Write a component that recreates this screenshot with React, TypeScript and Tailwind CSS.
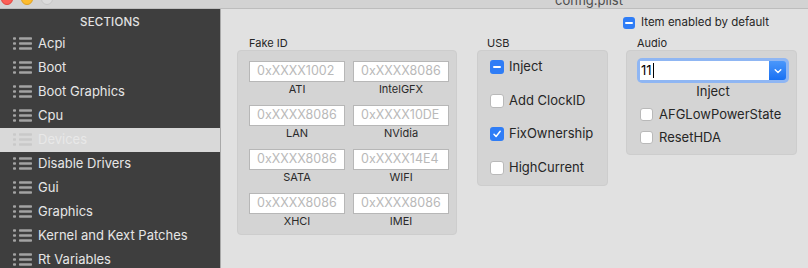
import React from "react";

const font = { fontFamily: "Inter, 'Noto Sans', 'Liberation Sans', sans-serif" };

function ListIcon({ light }: { light?: boolean }) {
  const c = light ? "#c9c9c9" : "#a3a3a3";
  return (
    <svg width="19" height="14" viewBox="0 0 19 14" className="shrink-0">
      {[1.5, 6.5, 11.5].map((y) => (
        <g key={y}>
          <rect x="0" y={y - 1.25} width="3" height="2.5" rx="0.8" fill={c} />
          <rect x="6" y={y - 1.25} width="13" height="2.5" rx="0.8" fill={c} />
        </g>
      ))}
    </svg>
  );
}

const items = [
  "Acpi",
  "Boot",
  "Boot Graphics",
  "Cpu",
  "Devices",
  "Disable Drivers",
  "Gui",
  "Graphics",
  "Kernel and Kext Patches",
  "Rt Variables",
];

function Check({ state, size = 14 }: { state: "on" | "mixed" | "off"; size?: number }) {
  if (state === "off")
    return (
      <div
        className="shrink-0 rounded-[3px] border border-[#b9b9b9] bg-white"
        style={{ width: size, height: size }}
      />
    );
  return (
    <div
      className="shrink-0 rounded-[3px] bg-[#2f7df6] flex items-center justify-center"
      style={{ width: size, height: size }}
    >
      {state === "mixed" ? (
        <div className="w-[8px] h-[2px] bg-white rounded-[1px]" />
      ) : (
        <svg width="10" height="10" viewBox="0 0 10 10">
          <path d="M2 5.2 L4.1 7.5 L8.2 2.3" fill="none" stroke="white" strokeWidth="1.5" strokeLinecap="round" strokeLinejoin="round" />
        </svg>
      )}
    </div>
  );
}

function Field({ v, label }: { v: string; label: string }) {
  return (
    <div className="flex flex-col items-center w-[96px]">
      <div className="w-[96px] h-[21px] bg-white border border-[#b7b7b7] flex items-center pl-[7px] text-[12.5px] text-[#b9b9b9] leading-none">
        {v}
      </div>
      <div className="text-[11px] text-[#2a2a2a] leading-[13px] mt-[1px]">{label}</div>
    </div>
  );
}

export default function App() {
  return (
    <div className="w-[808px] h-[268px] overflow-hidden flex flex-col bg-[#e1e1e1]" style={font}>
      {/* title bar */}
      <div className="h-[9px] shrink-0 bg-[#d3d3d3] border-b border-[#bdbdbd] relative overflow-hidden">
        <div className="absolute left-[1px] top-[-7px] flex gap-[8px]">
          <div className="w-[12px] h-[12px] rounded-full bg-[#fc5f57] border border-[#e0443e]" />
          <div className="w-[12px] h-[12px] rounded-full bg-[#fdbc2e] border border-[#dea123]" />
          <div className="w-[12px] h-[12px] rounded-full bg-[#dcdcdc] border border-[#c6c6c6]" />
        </div>
        <div className="absolute left-[555px] top-[-8px] text-[13px] text-[#4d4d4d] leading-[16px]">config.plist</div>
      </div>
      <div className="flex flex-1 min-h-0">
        {/* sidebar */}
        <div className="w-[221px] shrink-0 bg-[#3e3e3e] border-r border-[#a9a9a9] flex flex-col overflow-hidden">
          <div className="h-[23px] shrink-0 flex items-center justify-center text-[11.5px] font-medium text-[#e3e3e3] tracking-[0.2px] pt-[5px]">
            SECTIONS
          </div>
          {items.map((it) => {
            const sel = it === "Devices";
            return (
              <div
                key={it}
                className={`h-[24px] shrink-0 flex items-center pl-[13px] gap-[6px] ${sel ? "bg-[#d9d9d9]" : ""}`}
              >
                <ListIcon light={sel} />
                <span className={`text-[13px] ${sel ? "text-[#e8e8e8]" : "text-[#e6e6e6]"}`}>{it}</span>
              </div>
            );
          })}
        </div>
        {/* content */}
        <div className="flex-1 flex flex-col pl-[16px]">
          <div className="flex items-center gap-[6px] ml-[386px] mt-[7px] h-[13px] shrink-0">
            <Check state="mixed" size={12} />
            <span className="text-[11.5px] text-[#262626]">Item enabled by default</span>
          </div>
          <div className="flex mt-[7px] items-start">
            {/* Fake ID */}
            <div className="flex flex-col w-[220px]">
              <div className="text-[11px] text-[#262626] pl-[12px] h-[14px] leading-[14px]">Fake ID</div>
              <div className="bg-[#d4d4d4] rounded-[4px] border border-[#cdcdcd] h-[185px] pt-[10px] pl-[11px] flex flex-col gap-[9px]">
                <div className="flex gap-[8px]">
                  <Field v="0xXXXX1002" label="ATI" />
                  <Field v="0xXXXX8086" label="IntelGFX" />
                </div>
                <div className="flex gap-[8px]">
                  <Field v="0xXXXX8086" label="LAN" />
                  <Field v="0xXXXX10DE" label="NVidia" />
                </div>
                <div className="flex gap-[8px]">
                  <Field v="0xXXXX8086" label="SATA" />
                  <Field v="0xXXXX14E4" label="WIFI" />
                </div>
                <div className="flex gap-[8px]">
                  <Field v="0xXXXX8086" label="XHCI" />
                  <Field v="0xXXXX8086" label="IMEI" />
                </div>
              </div>
            </div>
            {/* USB */}
            <div className="flex flex-col w-[131px] ml-[20px]">
              <div className="text-[11px] text-[#262626] pl-[10px] h-[14px] leading-[14px]">USB</div>
              <div className="bg-[#d4d4d4] rounded-[4px] border border-[#cdcdcd] h-[136px] pt-[9px] pl-[12px] flex flex-col gap-[19.5px]">
                {[
                  ["Inject", "mixed"],
                  ["Add ClockID", "off"],
                  ["FixOwnership", "on"],
                  ["HighCurrent", "off"],
                ].map(([t, s]) => (
                  <div key={t} className="flex items-center gap-[5px] h-[14px]">
                    <Check state={s as "on" | "mixed" | "off"} />
                    <span className="text-[13px] text-[#262626]">{t}</span>
                  </div>
                ))}
              </div>
            </div>
            {/* Audio */}
            <div className="flex flex-col w-[171px] ml-[18px]">
              <div className="text-[11px] text-[#262626] pl-[11px] h-[14px] leading-[14px]">Audio</div>
              <div className="bg-[#d4d4d4] rounded-[4px] border border-[#cdcdcd] h-[105px] pt-[7px] pl-[10px] pr-[7px] flex flex-col">
                <div className="h-[25px] rounded-[5px] bg-[#8fb6f3] p-[3px] flex">
                  <div className="flex-1 bg-white flex items-center pl-[1px] text-[13px] text-black leading-none">
                    11<span className="w-[1px] h-[15px] bg-black ml-[1px]" />
                  </div>
                  <div className="w-[17px] bg-gradient-to-b from-[#4a97fb] to-[#1670f3] rounded-r-[3px] flex items-center justify-center">
                    <svg width="8" height="6" viewBox="0 0 8 6">
                      <path d="M1.2 1.8 L4 4.4 L6.8 1.8" fill="none" stroke="white" strokeWidth="1.4" strokeLinecap="round" strokeLinejoin="round" />
                    </svg>
                  </div>
                </div>
                <div className="text-[13px] text-[#262626] text-center h-[17px] leading-[17px] mt-[0px]">Inject</div>
                <div className="flex flex-col gap-[10px] mt-[8px] pl-[3px]">
                  {["AFGLowPowerState", "ResetHDA"].map((t) => (
                    <div key={t} className="flex items-center gap-[6px] h-[13px]">
                      <Check state="off" size={13} />
                      <span className="text-[13px] text-[#262626]">{t}</span>
                    </div>
                  ))}
                </div>
              </div>
            </div>
          </div>
        </div>
      </div>
    </div>
  );
}
